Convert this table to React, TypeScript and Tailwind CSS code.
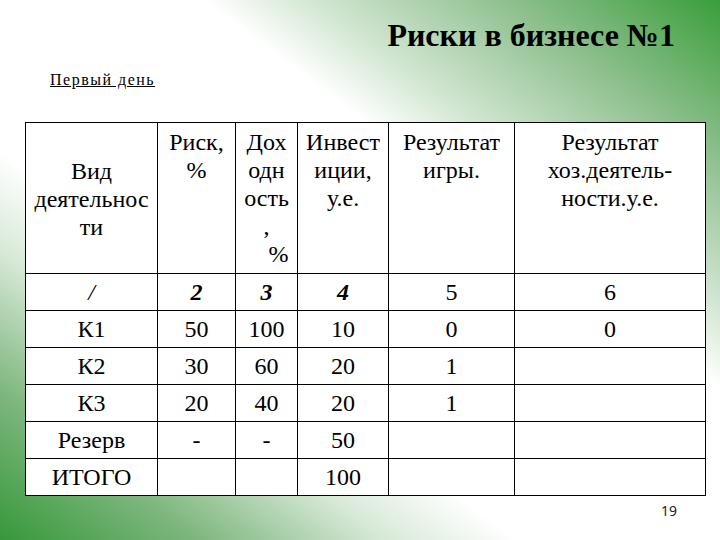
type Cell = { text: string; style?: string }

const rows: Cell[][] = [
  [
    { text: '/', style: 'italic' },
    { text: '2', style: 'italic font-bold' },
    { text: '3', style: 'italic font-bold' },
    { text: '4', style: 'italic font-bold' },
    { text: '5' },
    { text: '6' },
  ],
  [{ text: 'К1' }, { text: '50' }, { text: '100' }, { text: '10' }, { text: '0' }, { text: '0' }],
  [{ text: 'К2' }, { text: '30' }, { text: '60' }, { text: '20' }, { text: '1' }, { text: '' }],
  [{ text: 'К3' }, { text: '20' }, { text: '40' }, { text: '20' }, { text: '1' }, { text: '' }],
  [{ text: 'Резерв' }, { text: '-' }, { text: '-' }, { text: '50' }, { text: '' }, { text: '' }],
  [{ text: 'ИТОГО' }, { text: '' }, { text: '' }, { text: '100' }, { text: '' }, { text: '' }],
]

function Lines({ lines }: { lines: string[] }) {
  return (
    <>
      {lines.map((l, i) => (
        <div key={i} className="whitespace-nowrap font-['Liberation_Serif'] leading-[28px]">
          {l}
        </div>
      ))}
    </>
  )
}

export default function App() {
  return (
    <div className="flex h-[540px] w-[720px] flex-col bg-[linear-gradient(to_top_right,#36983a_0%,#7fb77f_14%,#d8e9d8_27%,#ffffff_36%,#ffffff_64%,#d0e5d0_72%,#8fc08f_85%,#3a9e3a_100%)] text-black">
      <div className="flex h-[64px] items-end justify-end pb-[5px] pr-[45px]">
        <span className="font-['Liberation_Serif'] text-[32px] font-bold [font-family:'Liberation_Serif',serif]">
          Риски в бизнесе №1
        </span>
      </div>
      <div className="mt-[8px] pl-[50px] font-['Liberation_Serif'] text-[16px] leading-[16px] tracking-[1.5px] underline">
        Первый день
      </div>

      <div className="ml-[25px] mt-[34px] font-['Liberation_Serif'] text-[24px]">
        <table className="w-[680px] table-fixed border-collapse bg-white font-['Liberation_Serif'] text-[24px] [font-family:'Liberation_Serif',serif]">
          <colgroup>
            <col className="w-[132px]" />
            <col className="w-[78px]" />
            <col className="w-[62px]" />
            <col className="w-[91px]" />
            <col className="w-[126px]" />
            <col className="w-[191px]" />
          </colgroup>
          <thead>
            <tr className="h-[151px] align-top">
              <th className="border border-black pt-[34px] text-center font-normal">
                <Lines lines={['Вид', 'деятельнос', 'ти']} />
              </th>
              <th className="border border-black pt-[5px] text-center font-normal">
                <Lines lines={['Риск,', '%']} />
              </th>
              <th className="border border-black pt-[5px] text-center font-normal">
                <Lines lines={['Дох', 'одн', 'ость', ',']} />
                <div className="pl-[24px] font-['Liberation_Serif'] leading-[28px]">%</div>
              </th>
              <th className="border border-black pt-[5px] text-center font-normal">
                <Lines lines={['Инвест', 'иции,', 'у.е.']} />
              </th>
              <th className="border border-black pt-[5px] text-center font-normal">
                <Lines lines={['Результат', 'игры.']} />
              </th>
              <th className="border border-black pt-[5px] text-center font-normal">
                <Lines lines={['Результат', 'хоз.деятель-', 'ности.у.е.']} />
              </th>
            </tr>
          </thead>
          <tbody>
            {rows.map((row, r) => (
              <tr key={r} className="h-[36px]">
                {row.map((c, i) => (
                  <td key={i} className={'border border-black text-center font-[\'Liberation_Serif\'] ' + (c.style || '')}>
                    {c.text}
                  </td>
                ))}
              </tr>
            ))}
          </tbody>
        </table>
      </div>

      <div className="mt-[8px] pr-[43px] text-right text-[14px] leading-[14px] text-[#222]">19</div>
    </div>
  )
}
